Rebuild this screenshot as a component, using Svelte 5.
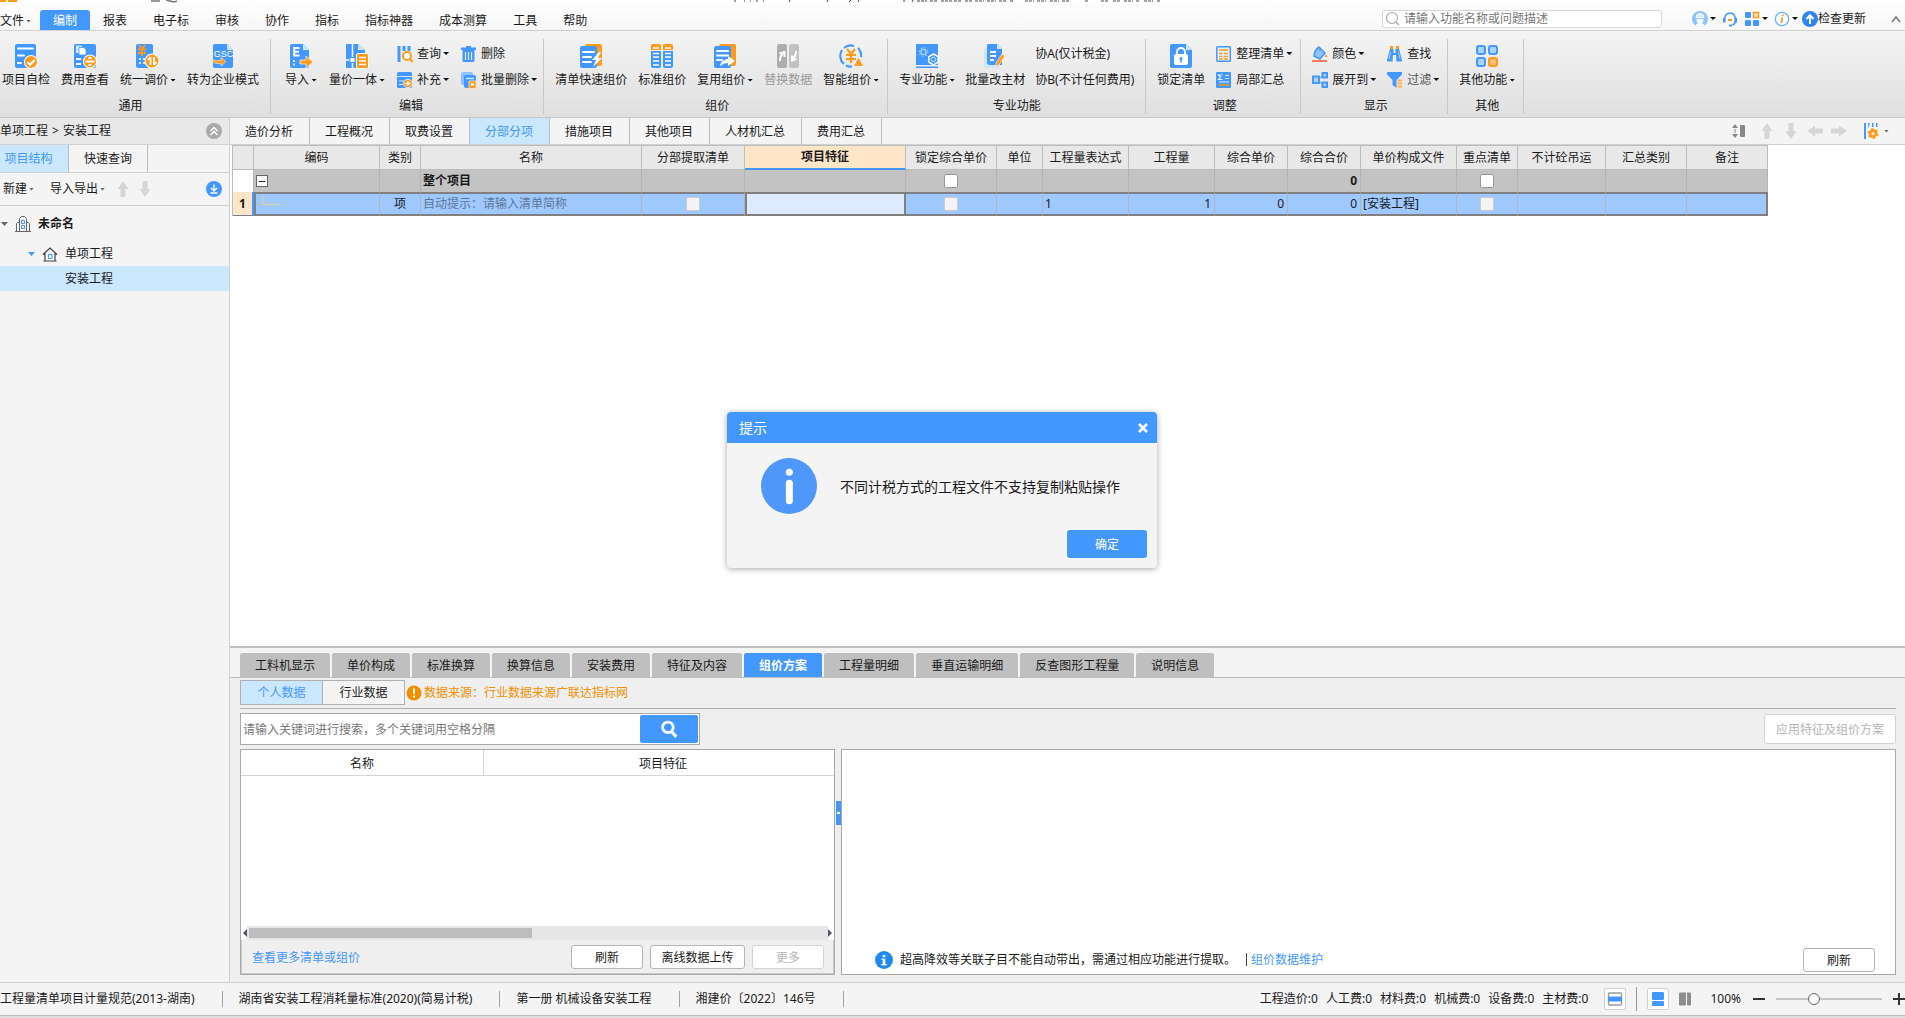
<script>
	const B = '#4398ff';
	const O = '#ff9a1a';

	let menu = $state('编制');
	let docTab = $state('分部分项');
	let sideTab = $state('项目结构');
	let detailTab = $state('组价方案');
	let source = $state('个人数据');
	let keyword = $state('');
	let helpQuery = $state('');
	let zoom = $state(34);
	let dialogOpen = $state(true);

	const menus = ['编制', '报表', '电子标', '审核', '协作', '指标', '指标神器', '成本测算', '工具', '帮助'];
	const docTabs = ['造价分析', '工程概况', '取费设置', '分部分项', '措施项目', '其他项目', '人材机汇总', '费用汇总'];
	const sideTabs = ['项目结构', '快速查询'];
	const detailTabs = ['工料机显示', '单价构成', '标准换算', '换算信息', '安装费用', '特征及内容', '组价方案', '工程量明细', '垂直运输明细', '反查图形工程量', '说明信息'];
	const costs = ['工程造价', '人工费', '材料费', '机械费', '设备费', '主材费'];
	const rules = ['工程量清单项目计量规范(2013-湖南)', '湖南省安装工程消耗量标准(2020)(简易计税)', '第一册 机械设备安装工程', '湘建价〔2022〕146号'];

	const groups = [
		{
			name: '通用',
			id: 'common',
			big: [
				{ t: '项目自检', i: 'check' },
				{ t: '费用查看', i: 'fee' },
				{ t: '统一调价', i: 'adjust', more: true },
				{ t: '转为企业模式', i: 'gsc' }
			]
		},
		{
			name: '编辑',
			id: 'edit',
			big: [
				{ t: '导入', i: 'import', more: true },
				{ t: '量价一体', i: 'merge', more: true }
			],
			cols: [
				[{ t: '查询', i: 'query', more: true }, { t: '补充', i: 'supply', more: true }],
				[{ t: '删除', i: 'trash' }, { t: '批量删除', i: 'batchDel', more: true }]
			]
		},
		{
			name: '组价',
			id: 'price',
			big: [
				{ t: '清单快速组价', i: 'quick' },
				{ t: '标准组价', i: 'standard' },
				{ t: '复用组价', i: 'reuse', more: true },
				{ t: '替换数据', i: 'swap', off: true },
				{ t: '智能组价', i: 'smart', more: true }
			]
		},
		{
			name: '专业功能',
			id: 'pro',
			big: [
				{ t: '专业功能', i: 'pro', more: true },
				{ t: '批量改主材', i: 'batchEdit' }
			],
			cols: [[{ t: '协A(仅计税金)' }, { t: '协B(不计任何费用)' }]]
		},
		{
			name: '调整',
			id: 'tune',
			big: [{ t: '锁定清单', i: 'lock' }],
			cols: [[{ t: '整理清单', i: 'sort', more: true }, { t: '局部汇总', i: 'sum' }]]
		},
		{
			name: '显示',
			id: 'view',
			big: [],
			cols: [
				[{ t: '颜色', i: 'color', more: true }, { t: '展开到', i: 'expand', more: true }],
				[{ t: '查找', i: 'find' }, { t: '过滤', i: 'filter', more: true, dim: true }]
			]
		},
		{ name: '其他', id: 'other', big: [{ t: '其他功能', i: 'other', more: true }] }
	];

	const columns = [
		{ t: '', w: 21 },
		{ t: '编码', w: 126 },
		{ t: '类别', w: 41 },
		{ t: '名称', w: 221 },
		{ t: '分部提取清单', w: 103 },
		{ t: '项目特征', w: 161 },
		{ t: '锁定综合单价', w: 91 },
		{ t: '单位', w: 46 },
		{ t: '工程量表达式', w: 86 },
		{ t: '工程量', w: 86 },
		{ t: '综合单价', w: 73 },
		{ t: '综合合价', w: 73 },
		{ t: '单价构成文件', w: 96 },
		{ t: '重点清单', w: 61 },
		{ t: '不计砼吊运', w: 88 },
		{ t: '汇总类别', w: 81 },
		{ t: '备注', w: 81 }
	];

	const icons = {
		check: `<rect x="1" width="21" height="24" rx="2" fill="${B}"/><path d="M4 4.500h15M4 11.500h6M4 19h3" stroke="#fff" stroke-width="2" stroke-linecap="round"/><circle cx="17" cy="18" r="7" fill="#fff"/><circle cx="17" cy="18" r="6" fill="${O}"/><path d="M13.500 18l2.500 3 4.500-5" fill="none" stroke="#fff" stroke-width="2"/>`,
		fee: `<rect x="1" width="22" height="24" rx="2" fill="${B}"/><path d="M3 1.500h5l2 2V9H3z" fill="#cbe7fe"/><path d="M6 3.500h5l2 2V11H6z" fill="#fff" stroke="${B}" stroke-width=".8"/><path d="M3 15h5M3 20h5" stroke="#fff" stroke-width="2"/><circle cx="17" cy="17.500" r="7" fill="#fff"/><circle cx="17" cy="17.500" r="6" fill="${O}"/><path d="M12.500 17.500h9M15.500 14h3M15.500 21h3" stroke="#fff" stroke-width="1.800"/>`,
		adjust: `<rect x="0" width="17" height="24" rx="2" fill="${B}"/><path d="M3 1l3 4 3-4M2 5.500h8M2 9h8M6 5v7" fill="none" stroke="${O}" stroke-width="2"/><path d="M3 15h2M3 19h2M7 15h2M7 19h2" stroke="#fff" stroke-width="1.500"/><circle cx="16" cy="17" r="7.500" fill="#fff"/><circle cx="16" cy="17" r="6.500" fill="${O}"/><path d="M14.500 13v8M12 16l2.500-3M18 13v8M20.500 18L18 21" fill="none" stroke="#fff" stroke-width="1.800"/>`,
		gsc: `<path d="M4 0h12l6 6v16a2 2 0 0 1-2 2H4a2 2 0 0 1-2-2V2a2 2 0 0 1 2-2z" fill="${B}"/><path d="M16 0v6h6z" fill="#cbe7fe"/><text x="12.500" y="13" text-anchor="middle" font-size="9" fill="#fff" font-family="Liberation Sans, sans-serif">GSC</text><path d="M1 15c1 5 5 5 9 4v3l5-4.500-5-4v2.500c-3 .8-6 1-9-1z" fill="${O}" stroke="#fff" stroke-width=".5"/>`,
		import: `<path d="M3 0h11l6 6v16a2 2 0 0 1-2 2H3a2 2 0 0 1-2-2V2a2 2 0 0 1 2-2z" fill="${B}"/><path d="M14 0v6h6z" fill="#cbe7fe"/><path d="M10.500 4H5.200v7.500h5.300M5 7.700h5" fill="none" stroke="#fff" stroke-width="2"/><path d="M4 16h2v2H4zM4 19.500h2v2H4z" fill="#cbe7fe"/><path d="M11 16h6v-4l7 6-7 6v-4h-6z" fill="${O}" stroke="#eee" stroke-width=".8"/>`,
		merge: `<path d="M2 0h11l7 6v18H2a1 1 0 0 1-1-1V1a1 1 0 0 1 1-1z" fill="${B}"/><path d="M13 0v6h7z" fill="#cbe7fe"/><path d="M7.500 0v24M1 16h19" stroke="#fff" stroke-width="1.500"/><rect x="5" y="13.500" width="5" height="5" fill="#fff" stroke="${B}"/><rect x="11.500" y="9.500" width="12" height="15" rx="1.500" fill="${O}" stroke="#fff"/><path d="M14 13.500h7M14 17h7M14 20.500h7" stroke="#fff" stroke-width="1.600"/>`,
		quick: `<rect x="6" width="17" height="22" rx="2" fill="${O}"/><rect x="1" y="2" width="17" height="22" rx="2" fill="${B}"/><path d="M4 8h11M4 13h8M4 18h8" stroke="#fff" stroke-width="2" stroke-linecap="round"/><path d="M20 8l-7 8h4l-3 7 9-9h-4l3-6z" fill="#fff"/>`,
		standard: `<path d="M1 2a2 2 0 0 1 2-2h6a2 2 0 0 1 2 2v4H1zM13 2a2 2 0 0 1 2-2h6a2 2 0 0 1 2 2v4H13z" fill="${O}"/><path d="M1 7h10v15a2 2 0 0 1-2 2H3a2 2 0 0 1-2-2zM13 7h10v15a2 2 0 0 1-2 2h-6a2 2 0 0 1-2-2z" fill="${B}"/><path d="M3 4h6M15 4h6M3 9.500h6M15 9.500h6M3 13h6M15 13h6M3 17h6M15 17h6M3 21h6M15 21h6" stroke="#fff" stroke-width="1.400"/>`,
		reuse: `<rect x="6" width="17" height="22" rx="2" fill="${O}"/><rect x="1" y="2" width="17" height="22" rx="2" fill="${B}"/><path d="M4 7h11M4 11.500h11M4 16h5" stroke="#fff" stroke-width="2" stroke-linecap="round"/><path d="M7 22c1-5 5-7 8-7v-3l7 5-7 5v-3c-3 0-5 1-8 3z" fill="#fff"/>`,
		swap: `<rect x="1" width="10" height="24" rx="2" fill="#adadad"/><rect x="13" width="10" height="24" rx="2" fill="#c2c2c2"/><path d="M4 17c0-4 1-6 3-7M3.500 9.500L8.500 8v5M20 7c0 4-1 6-3 7M20.500 15l-4.500 1.500v-5" fill="none" stroke="#fff" stroke-width="2"/>`,
		smart: `<path d="M5 20A10.500 10.500 0 0 1 3 6M5 4a10.500 10.500 0 0 1 10-2M19 4a10.500 10.500 0 0 1 3 9M7 21.500a10 10 0 0 0 6 1" fill="none" stroke="${B}" stroke-width="2.200"/><path d="M8 5l4 5 4-5M7 11h10M7 15h10M12 10v9" fill="none" stroke="${O}" stroke-width="2.200"/><path d="M15 22l4.500-8 4.500 8z" fill="${O}"/>`,
		pro: `<path d="M2 0h20a1 1 0 0 1 1 1v20H1V1a1 1 0 0 1 1-1zM1 22.500h22V24H1z" fill="${B}"/><circle cx="8.500" cy="8" r="2.600" fill="none" stroke="#a9d2ff" stroke-width="1.300"/><circle cx="8.500" cy="8" r="4.200" fill="none" stroke="#a9d2ff" stroke-width="1.200" stroke-dasharray="1.300 2"/><path d="M18.500 10l4.700 2.700v5.400l-4.700 2.700-4.700-2.700v-5.400z" fill="${B}" stroke="#fff" stroke-width="1.500"/><circle cx="18.500" cy="15.400" r="2.200" fill="${B}" stroke="#cbe7fe"/>`,
		batchEdit: `<path d="M3 4h14v18a2 2 0 0 1-2 2H3a2 2 0 0 1-2-2V6z" fill="#cbe7fe"/><path d="M5 0h9l5 5v16H7a3 3 0 0 1-3-3V1z" fill="${B}"/><path d="M14 0v5h5z" fill="#cbe7fe"/><path d="M7 8h6M7 12h6M7 16h4" stroke="#fff" stroke-width="1.800"/><path d="M19 10l3 2-6 9-3.500 1.500.5-3.500z" fill="${O}" stroke="#fff" stroke-width=".6"/>`,
		lock: `<path d="M3 0h14l6 6v16a2 2 0 0 1-2 2H3a2 2 0 0 1-2-2V2a2 2 0 0 1 2-2z" fill="${B}"/><path d="M17 0v6h6z" fill="#cbe7fe"/><path d="M8 11V8a4 4 0 0 1 8 0v3" fill="none" stroke="#fff" stroke-width="2"/><rect x="5" y="10" width="14" height="11" rx="2" fill="#fff"/><circle cx="12" cy="14.500" r="1.600" fill="${B}"/><path d="M12 15v3.500" stroke="${B}" stroke-width="1.600"/>`,
		other: `<rect x="2" y="2" width="8" height="8" rx="2" fill="#a9d2ff" stroke="${B}" stroke-width="2"/><rect x="14" y="2" width="8" height="8" rx="2" fill="#a9d2ff" stroke="${B}" stroke-width="2"/><rect x="2" y="14" width="8" height="8" rx="2" fill="#a9d2ff" stroke="${B}" stroke-width="2"/><rect x="14" y="14" width="8" height="8" rx="2" fill="#ffbf70" stroke="${O}" stroke-width="2"/>`,
		query: `<path d="M.5 0h3v16h-3zM5.500 0h3v5h-3zM10.500 0h3v5h-3z" fill="${B}"/><circle cx="10" cy="10" r="4" fill="#fff" stroke="${O}" stroke-width="2"/><path d="M12.500 12.500L15.500 16" stroke="${O}" stroke-width="2"/>`,
		supply: `<rect width="15" height="16" rx="1.500" fill="${B}"/><path d="M0 4.500h15M2 9h5M2 12.500h4" stroke="#cbe7fe" stroke-width="1.200"/><circle cx="11" cy="11.500" r="4.300" fill="${O}" stroke="#eee"/><path d="M8.500 11.500h5M11 9v5" stroke="#fff" stroke-width="1.400"/>`,
		trash: `<path d="M5 0h5v1.500h5V4H0V1.500h5zM1.500 4h12v10.500a1.500 1.500 0 0 1-1.500 1.500H3a1.500 1.500 0 0 1-1.500-1.500z" fill="${B}"/><path d="M4.500 6v8M7.500 6v8M10.500 6v8" stroke="#d8ebff" stroke-width="1.200"/>`,
		batchDel: `<rect width="12" height="13" rx="2" fill="#8cc2ff"/><rect x="3" y="3" width="12" height="13" rx="2" fill="${B}"/><path d="M5 6.500h8" stroke="#cbe7fe" stroke-width="1.500"/><path d="M8 9h7v6.500a1 1 0 0 1-1 1H9a1 1 0 0 1-1-1z" fill="${O}" stroke="#ffe5c8" stroke-width=".8"/><path d="M10 11h3v3h-3z" fill="#ffe5c8"/>`,
		sort: `<rect x=".8" y=".8" width="13.500" height="14.500" rx="1" fill="#e3f0ff" stroke="${B}" stroke-width="1.500"/><path d="M3 4h9M3 7.500h3.500M3 10.500h3.500M3 13h3.500M8 7.500h4M8 10.500h4M8 13h4" stroke="${O}" stroke-width="1.700"/>`,
		sum: `<rect width="15" height="16" rx="1" fill="${B}"/><path d="M6.500 3H2.500l2 2-2 2.500h4M9 3.500h4M9 6.500h4M3 10h10" fill="none" stroke="#e3f0ff" stroke-width="1.200"/><path d="M3 13h10" stroke="${O}" stroke-width="1.500"/>`,
		color: `<path d="M7 1l6 6-5 6-6-3 1-5z" fill="#8cc2ff" stroke="${B}" stroke-width="1.500"/><path d="M4 5C4 0 8 0 8 5" fill="none" stroke="${B}"/><path d="M14 8l1.500 3h-3z" fill="${O}"/><path d="M0 15h15" stroke="#f47a5a" stroke-width="2"/>`,
		expand: `<rect x="1" y="4.500" width="6" height="6.500" fill="#a9d2ff" stroke="${B}" stroke-width="2"/><rect x="10.500" y="1" width="4.500" height="4.500" fill="#a9d2ff" stroke="${B}" stroke-width="2"/><rect x="10.500" y="10.500" width="4.500" height="4.500" fill="#a9d2ff" stroke="${B}" stroke-width="2"/><path d="M7 7l3-3M7 9l3 3" stroke="${B}"/>`,
		find: `<path d="M3 3h3.500v4h2V3H12l3 11v1.500H9.500L9 9H6l-.5 6.500H0V14z" fill="${B}"/><path d="M3 0h3v3H3zM9 0h3v3H9z" fill="${O}"/><path d="M3.500 6L2 13M11.500 6l1.500 7" stroke="#a9d2ff"/>`,
		filter: `<path d="M0 0h15v2.500L9.500 8v8L5.500 13V8L0 2.500z" fill="${B}"/><path d="M10.500 8.500H15M10.500 11.500H15M10.500 14.500H15" stroke="#ffb24d" stroke-width="1.800"/>`,
		user: `<circle cx="8" cy="8" r="8" fill="#8cc2ff"/><path d="M4.500 8h7v1.500a3.500 3.500 0 0 1-1.500 2.700l3 2a8 8 0 0 1-10 0l3-2a3.500 3.500 0 0 1-1.500-2.700z" fill="#f4faff"/><path d="M4 6.500a4 4 0 0 1 8 0zM8 2v3" fill="#cbe7fe" stroke="#fff" stroke-width="1"/>`,
		headset: `<path d="M2.500 8a5.500 6 0 0 1 11 0v2a5.500 4.500 0 0 1-3 4" fill="none" stroke="${B}" stroke-width="1.600"/><path d="M1 7h2.500v4.500H1zM12.500 7H15v4.500h-2.500z" fill="${B}"/><path d="M6 9h4" stroke="${O}" stroke-width="2"/><path d="M7 14.500h3" stroke="${B}" stroke-width="2"/>`,
		apps: `<rect x="1" y="1" width="6" height="6" rx="1" fill="${B}"/><rect x="9.500" y="1.500" width="5" height="5" fill="#ffe5c8" stroke="${O}" stroke-width="1.500"/><rect x="1" y="9" width="6" height="6" rx="1" fill="${B}"/><rect x="9" y="9" width="6" height="6" rx="1" fill="${B}"/>`,
		about: `<circle cx="8" cy="8" r="6.700" fill="#f4faff" stroke="#74b4ff" stroke-width="1.300"/><path d="M8.300 6.500L7.500 12" stroke="${O}" stroke-width="1.700"/><circle cx="8.800" cy="4.200" r="1" fill="${O}"/>`,
		update: `<circle cx="8" cy="8" r="8" fill="#2d86f7"/><path d="M8 13V5M4.500 8L8 4.300 11.500 8" fill="none" stroke="#fff" stroke-width="2"/>`,
		rowHeight: `<path d="M3 1l3 4H0zM3 15l3-4H0zM2.500 6h1v4h-1z" fill="#888"/><rect x="8" y="2" width="5" height="12" rx="1" fill="#888"/>`,
		up: `<path d="M8 0l5.500 8h-3v8h-5V8h-3z" fill="#d6d6d6"/>`,
		down: `<path d="M8 16l5.500-8h-3V0h-5v8h-3z" fill="#d6d6d6"/>`,
		left: `<path d="M0 8l8-5.500v3h8v5H8v3z" fill="#d6d6d6"/>`,
		right: `<path d="M16 8L8 2.500v3H0v5h8v3z" fill="#d6d6d6"/>`,
		columns: `<path d="M1 0h2v16H1zM5 0h1.500v3l-1 2zM9 0h1.500v4H9zM13 0h1.500v4H13z" fill="${B}"/><circle cx="10" cy="10.500" r="3" fill="none" stroke="${O}" stroke-width="2.800"/><circle cx="10" cy="10.500" r="4.600" fill="none" stroke="${O}" stroke-width="1.600" stroke-dasharray="2.400 2.400"/>`,
		collapse: `<circle cx="8" cy="8" r="8" fill="#aaa"/><path d="M4.500 8L8 4.500 11.500 8M4.500 12L8 8.500l3.500 3.500" fill="none" stroke="#fff" stroke-width="1.500"/>`,
		download: `<circle cx="8" cy="8" r="8" fill="${B}"/><path d="M8 3.500v6M5 7l3 3 3-3M4.500 12h7" fill="none" stroke="#fff" stroke-width="1.400"/>`,
		building: `<path d="M4.500 15V2.500l2-2h3l2 2V15M4.500 6.500h-2l-1 1V15M11.500 6.500h2l1 1V15M0 15.500h16" fill="none" stroke="#666"/><path d="M6.500 4.500h3v3h-3zM6.500 9.500h3v3h-3z" fill="none" stroke="${B}"/>`,
		house: `<path d="M1 8.500L8 2l7 6.500M3 7.500V15h10V7.500M1.500 15h13" fill="none" stroke="#444" stroke-width="1.200"/><path d="M6.500 8.500h3.500v4H6.500z" fill="none" stroke="${B}"/>`,
		warn: `<circle cx="8" cy="8" r="7.500" fill="#f28f00"/><path d="M7 3.500h2V9H7zM7 10.500h2v2H7z" fill="#fff"/>`,
		info: `<circle cx="8" cy="8" r="8" fill="#1f8bf0"/><path d="M6.800 3.500h2.400v2H6.800zM5.800 6.800h3.400v4.700h1.300v1.200H5.500v-1.200h1.300V8h-1z" fill="#fff"/>`,
		bigInfo: `<circle cx="8" cy="8" r="8" fill="#4f97fb"/><circle cx="8.100" cy="4.100" r="1" fill="#fff"/><path d="M8.100 7.200v5" stroke="#fff" stroke-width="2" stroke-linecap="round"/>`,
		search: `<circle cx="7" cy="6.500" r="4.700" fill="none" stroke="#fff" stroke-width="2.400"/><path d="M10.500 10.500L14.500 15" stroke="#fff" stroke-width="2.800"/>`,
		lens: `<circle cx="7" cy="7" r="5.500" fill="none" stroke="#aaa" stroke-width="1.200"/><path d="M11 11l3 3" stroke="#aaa" stroke-width="1.500"/>`,
		paneMid: `<rect x="1.500" y="2" width="13" height="12" rx="1" fill="#fff" stroke="#999" stroke-width="1.300"/><path d="M1 5.500h14v5H1z" fill="${B}"/>`,
		paneRow: `<rect x="2" y="1" width="12" height="8" rx="1.200" fill="${B}"/><rect x="2" y="10" width="12" height="5" rx="1.200" fill="${B}"/>`,
		paneCol: `<rect x="2" y="1.500" width="7" height="13" rx="1" fill="#8d8d8d"/><rect x="10" y="1.500" width="4" height="13" rx="1" fill="#8d8d8d"/>`
	};
</script>

{#snippet icon(name, box = 16, size = '')}
	<svg class="icon {size}" viewBox="0 0 {box} {box}" aria-hidden="true">{@html icons[name]}</svg>
{/snippet}

{#snippet caret()}<span class="caret"></span>{/snippet}

{#snippet tool(b)}
	<button class="small" class:dim={b.dim}>
		{#if b.i}{@render icon(b.i)}{/if}<span>{b.t}</span>{#if b.more}{@render caret()}{/if}
	</button>
{/snippet}

<div class="app">
	<header class="menubar">
		<svg class="titlebar" viewBox="0 0 1905 3" aria-hidden="true">
			<path d="M0 1h6M8 1h9" stroke={O} stroke-width="2" />
			<path d="M151 1h9M166 0l8 2 3-1" stroke="#777" stroke-width="1.500" fill="none" />
			<path d="M734 1h2M744 1h1M750 1h1M756 1h2M763 1h1M789 2l1-2M827 2l1-2M849 2l2-2M858 2l1-2M904 0v2M912 2l1-2M917 1h10M930 1h8M941 1h11M954 1h8M965 1h7M975 1h9M987 1h9M999 1h8M1010 1h3M1025 1h9M1037 1h9M1050 1h9M1062 1h8M1085 1h3M1101 1h8M1113 1h8M1124 1h9M1136 1h4M1144 1h9M1157 1h3" stroke="#444" stroke-width="1" stroke-dasharray="3 1" />
		</svg>
		<nav class="menus">
			<button class="file">文件<span class="caret grey"></span></button>
			{#each menus as m}
				<button class:active={menu === m} onclick={() => (menu = m)}>{m}</button>
			{/each}
		</nav>
		<label class="help-search">
			{@render icon('lens')}
			<input bind:value={helpQuery} placeholder="请输入功能名称或问题描述" aria-label="搜索功能" />
		</label>
		<div class="account">
			<button aria-label="用户">{@render icon('user')}{@render caret()}</button>
			<button aria-label="客服">{@render icon('headset')}</button>
			<button aria-label="应用">{@render icon('apps')}{@render caret()}</button>
			<button aria-label="关于">{@render icon('about')}{@render caret()}</button>
			<button class="update">{@render icon('update')}检查更新</button>
			<button class="fold" aria-label="收起">
				<svg viewBox="0 0 10 8" aria-hidden="true"><path d="M1 7l4-5 4 5" fill="none" stroke="#888" stroke-width="2" /></svg>
			</button>
		</div>
	</header>

	<div class="ribbon">
		{#each groups as g}
			<section class="group {g.id}">
				<div class="tools">
					{#each g.big as b}
						<button class="big" disabled={b.off}>
							{@render icon(b.i, 24, 'lg')}
							<span class="label">{b.t}{#if b.more}{@render caret()}{/if}</span>
						</button>
					{/each}
					{#each g.cols ?? [] as col}
						<div class="col">
							{#each col as b}{@render tool(b)}{/each}
						</div>
					{/each}
				</div>
				<div class="group-name">{g.name}</div>
			</section>
		{/each}
	</div>

	<div class="body">
		<aside class="side">
			<div class="crumb">
				<span>单项工程</span>
				<span>&gt;</span>
				<span>安装工程</span>
				<button aria-label="折叠">{@render icon('collapse')}</button>
			</div>
			<div class="side-tabs">
				{#each sideTabs as t}
					<button class:active={sideTab === t} onclick={() => (sideTab = t)}>{t}</button>
				{/each}
			</div>
			<div class="side-tools">
				<button>新建<span class="caret grey"></span></button>
				<button>导入导出<span class="caret grey"></span></button>
				<button aria-label="上移">{@render icon('up')}</button>
				<button aria-label="下移">{@render icon('down')}</button>
				<button class="end" aria-label="下载">{@render icon('download')}</button>
			</div>
			<ul class="tree">
				<li class="root"><span class="caret grey"></span>{@render icon('building')}<b>未命名</b></li>
				<li class="unit"><span class="caret blue"></span>{@render icon('house')}<span>单项工程</span></li>
				<li class="leaf selected">安装工程</li>
			</ul>
		</aside>

		<main>
			<div class="doc-tabs">
				{#each docTabs as t}
					<button class:active={docTab === t} onclick={() => (docTab = t)}>{t}</button>
				{/each}
				<div class="doc-tools">
					<button aria-label="行高">{@render icon('rowHeight')}</button>
					<button aria-label="上移">{@render icon('up')}</button>
					<button aria-label="下移">{@render icon('down')}</button>
					<button aria-label="左移">{@render icon('left')}</button>
					<button aria-label="右移">{@render icon('right')}</button>
					<button class="setup" aria-label="列设置">{@render icon('columns')}<span class="caret grey"></span></button>
				</div>
			</div>

			<div class="grid">
				<table>
					<colgroup>
						{#each columns as c}<col style="width: {c.w}px" />{/each}
					</colgroup>
					<thead>
						<tr>
							{#each columns as c}<th class:current={c.t === '项目特征'}>{c.t}</th>{/each}
						</tr>
					</thead>
					<tbody>
						<tr class="total">
							<td class="num"></td>
							<td class="code"><button class="minus" aria-label="收起"></button></td>
							<td></td>
							<td>整个项目</td>
							<td></td>
							<td></td>
							<td class="mid"><input type="checkbox" aria-label="锁定综合单价" /></td>
							<td></td>
							<td></td>
							<td></td>
							<td></td>
							<td class="right">0</td>
							<td></td>
							<td class="mid"><input type="checkbox" aria-label="重点清单" /></td>
							<td></td>
							<td></td>
							<td></td>
						</tr>
						<tr class="picked">
							<td class="num">1</td>
							<td class="code">
								<svg class="branch" viewBox="0 0 18 18" aria-hidden="true"><path d="M.5 0v9.500h17" fill="none" stroke="#eccb9c" /></svg>
							</td>
							<td class="mid">项</td>
							<td class="hint">自动提示：请输入清单简称</td>
							<td class="mid"><input type="checkbox" disabled aria-label="分部提取清单" /></td>
							<td class="cursor"></td>
							<td class="mid"><input type="checkbox" disabled aria-label="锁定综合单价" /></td>
							<td></td>
							<td>1</td>
							<td class="right">1</td>
							<td class="right">0</td>
							<td class="right">0</td>
							<td>[安装工程]</td>
							<td class="mid"><input type="checkbox" disabled aria-label="重点清单" /></td>
							<td></td>
							<td></td>
							<td></td>
						</tr>
					</tbody>
				</table>
			</div>

			<section class="detail">
				<div class="detail-tabs">
					{#each detailTabs as t}
						<button class:active={detailTab === t} onclick={() => (detailTab = t)}>{t}</button>
					{/each}
				</div>
				<div class="source">
					{#each ['个人数据', '行业数据'] as s}
						<button class:active={source === s} onclick={() => (source = s)}>{s}</button>
					{/each}
					{@render icon('warn')}
					<span>数据来源：行业数据来源广联达指标网</span>
				</div>
				<div class="search-row">
					<div class="search">
						<input bind:value={keyword} placeholder="请输入关键词进行搜索，多个关键词用空格分隔" aria-label="关键词" />
						<button aria-label="搜索">{@render icon('search', 16, 'md')}</button>
					</div>
					<button class="btn apply" disabled>应用特征及组价方案</button>
				</div>
				<div class="panes">
					<div class="pane schemes">
						<table>
							<thead><tr><th class="name">名称</th><th class="feature">项目特征</th></tr></thead>
						</table>
						<div class="hscroll">
							<span class="arrow prev"></span>
							<div class="track"><div class="thumb"></div></div>
							<span class="arrow next"></span>
						</div>
						<footer>
							<a href="#more">查看更多清单或组价</a>
							<button class="btn">刷新</button>
							<button class="btn wide">离线数据上传</button>
							<button class="btn" disabled>更多</button>
						</footer>
					</div>
					<button class="splitter" aria-label="收起面板"></button>
					<div class="pane result">
						<footer>
							{@render icon('info', 16, 'md')}
							<span class="note">超高降效等关联子目不能自动带出，需通过相应功能进行提取。</span>
							<a href="#maintain">组价数据维护</a>
							<button class="btn">刷新</button>
						</footer>
					</div>
				</div>
			</section>
		</main>
	</div>

	<footer class="status">
		{#each rules as r}<span class="rule">{r}</span>{/each}
		<div class="costs">
			{#each costs as c}<span>{c}:0</span>{/each}
		</div>
		<button class="pane-btn boxed" aria-label="显示中部">{@render icon('paneMid')}</button>
		<span class="bar"></span>
		<button class="pane-btn boxed" aria-label="上下布局">{@render icon('paneRow')}</button>
		<button class="pane-btn" aria-label="左右布局">{@render icon('paneCol')}</button>
		<span class="percent">100%</span>
		<button class="step" aria-label="缩小" onclick={() => (zoom -= 5)}></button>
		<input type="range" min="0" max="100" bind:value={zoom} aria-label="缩放" />
		<button class="step plus" aria-label="放大" onclick={() => (zoom += 5)}></button>
	</footer>

	{#if dialogOpen}
		<div class="dialog" role="alertdialog" aria-labelledby="dlg-title">
			<header>
				<h2 id="dlg-title">提示</h2>
				<button aria-label="关闭" onclick={() => (dialogOpen = false)}>
					<svg viewBox="0 0 10 10" aria-hidden="true"><path d="M1 1l8 8M9 1l-8 8" stroke="#fff" stroke-width="2.500" /></svg>
				</button>
			</header>
			<div class="message">
				{@render icon('bigInfo', 16, 'xl')}
				<p>不同计税方式的工程文件不支持复制粘贴操作</p>
			</div>
			<button class="ok" onclick={() => (dialogOpen = false)}>确定</button>
		</div>
	{/if}
</div>

<style>
	:global(body) {
		overflow: hidden;
	}

	.app {
		--blue: #4398ff;
		--sky: #cbe7fe;
		--line: #bdbdbd;
		display: flex;
		flex-direction: column;
		min-height: 100vh;
		box-sizing: border-box;
		border-bottom: 2px solid #dedede;
		background: #f4f4f4;
		color: #1a1a1a;
		font: 12px/16px 'Noto Sans', 'Noto Sans CJK SC', sans-serif;
		white-space: nowrap;
	}

	.app :global(*) {
		box-sizing: border-box;
	}

	button,
	input {
		margin: 0;
		padding: 0;
		border: 0;
		background: none;
		color: inherit;
		font: inherit;
	}

	button {
		display: flex;
		align-items: center;
		justify-content: center;
	}

	input::placeholder {
		color: #777;
		opacity: 1;
	}

	a {
		color: var(--blue);
		text-decoration: none;
	}

	.icon {
		width: 16px;
		height: 16px;
		flex: none;
		overflow: visible;
	}

	.icon.md {
		width: 18px;
		height: 18px;
	}

	.icon.lg {
		width: 24px;
		height: 24px;
	}

	.icon.xl {
		width: 56px;
		height: 56px;
	}

	.caret {
		width: 6px;
		height: 3px;
		margin-left: 2px;
		flex: none;
		background: #111;
		clip-path: polygon(0 0, 100% 0, 50% 100%);
	}

	.caret.grey {
		width: 5px;
		background: #666;
	}

	.caret.blue {
		background: var(--blue);
	}

	/* menu bar */
	.menubar {
		position: relative;
		display: flex;
		align-items: flex-end;
		height: 31px;
		border-bottom: 1px solid #d2d2d2;
		background: linear-gradient(#fff, #f6f6f6);
	}

	.titlebar {
		position: absolute;
		top: 0;
		left: 0;
		width: 100%;
		height: 3px;
	}

	.menus {
		display: flex;
		flex: 1;
	}

	.menus button {
		height: 20px;
		padding: 2px 13px 0;
		border-radius: 3px 3px 0 0;
	}

	.menus .file {
		width: 40px;
		padding-left: 0;
		justify-content: flex-start;
	}

	.menus .active {
		background: var(--blue);
		color: #fff;
	}

	.help-search {
		display: flex;
		align-items: center;
		gap: 3px;
		width: 280px;
		height: 18px;
		margin-bottom: 2px;
		padding: 0 2px;
		border: 1px solid #d9d9d9;
		border-radius: 3px;
		background: #fff;
	}

	.help-search input {
		flex: 1;
		outline: none;
	}

	.account {
		display: flex;
		align-items: center;
		gap: 6px;
		height: 24px;
		padding: 1px 4px 0 30px;
	}

	.account .update {
		margin-left: -2px;
	}

	.account .fold {
		margin-left: 19px;
	}

	.fold svg {
		width: 10px;
		height: 8px;
	}

	/* ribbon */
	.ribbon {
		display: flex;
		height: 87px;
		padding-top: 8px;
		border-bottom: 1px solid #c9c9c9;
		background: linear-gradient(#f4f4f4, #dfdfdf);
	}

	.group {
		display: flex;
		flex-direction: column;
		height: 75px;
		padding: 5px 8px 0 11px;
		border-right: 1px solid #c8c8c8;
	}

	.group.common {
		padding: 5px 11px 0 2px;
	}

	.group.edit {
		padding: 5px 6px 0 14px;
	}

	.group.pro {
		padding-right: 11px;
	}

	.tools {
		display: flex;
		flex: 1;
		gap: 11px;
	}

	.edit .tools {
		gap: 12px;
	}

	.pro .tools {
		gap: 10px;
	}

	.big {
		flex-direction: column;
		justify-content: flex-start;
		gap: 4px;
	}

	.big:disabled {
		color: #999;
	}

	.label {
		display: flex;
		align-items: center;
	}

	.col {
		display: flex;
		flex-direction: column;
		gap: 9px;
		padding-top: 1px;
	}

	.small {
		justify-content: flex-start;
		gap: 4px;
		height: 17px;
	}

	.small .caret {
		margin-left: -2px;
	}

	.small.dim {
		color: #555;
	}

	.group-name {
		height: 16px;
		text-align: center;
	}

	/* side panel */
	.body {
		display: flex;
		flex: 1;
	}

	.side {
		display: flex;
		flex-direction: column;
		width: 230px;
		border-right: 1px solid #d0d0d0;
	}

	.crumb {
		display: flex;
		align-items: center;
		gap: 4px;
		height: 27px;
		padding-right: 7px;
		background: #e8e8e8;
		border-bottom: 1px solid #d0d0d0;
	}

	.crumb button {
		margin-left: auto;
	}

	.side-tabs {
		display: flex;
		height: 28px;
		border-bottom: 1px solid #d0d0d0;
	}

	.side-tabs button {
		width: 79px;
		border-right: 1px solid var(--line);
	}

	.side-tabs button:first-child {
		width: 69px;
		padding-right: 11px;
	}

	.side-tabs .active,
	.doc-tabs .active,
	.source .active {
		background: var(--sky);
		color: var(--blue);
	}

	.side-tools {
		display: flex;
		align-items: center;
		gap: 6px;
		height: 33px;
		padding: 0 7px 0 3px;
		border-bottom: 1px solid #d0d0d0;
	}

	.side-tools button:nth-child(2) {
		margin: 0 4px 0 10px;
	}

	.side-tools .end {
		margin-left: auto;
	}

	.tree {
		margin: 0;
		padding: 4px 0 0;
		list-style: none;
	}

	.tree li {
		display: flex;
		align-items: center;
		height: 25px;
	}

	.tree .caret {
		width: 7px;
		height: 4px;
		margin-left: 1px;
	}

	.tree .root {
		gap: 7px;
		height: 28px;
	}

	.tree .unit {
		gap: 7px;
		height: 28px;
		padding: 4px 0 0 27px;
	}

	.tree .leaf {
		padding-left: 65px;
	}

	.tree .selected {
		background: var(--sky);
	}

	/* document tabs */
	main {
		display: flex;
		flex: 1;
		flex-direction: column;
		min-width: 0;
	}

	.doc-tabs {
		display: flex;
		height: 27px;
		border-bottom: 1px solid #d0d0d0;
	}

	.doc-tabs > button {
		padding: 2px 16px 0 15px;
		border-right: 1px solid var(--line);
	}

	.doc-tools {
		display: flex;
		align-items: center;
		gap: 8px;
		margin-left: auto;
		padding-right: 16px;
	}

	.setup {
		gap: 3px;
		margin-left: 8px;
	}

	.doc-tools button:first-child {
		margin-right: 3px;
	}

	/* quantity grid */
	.grid {
		flex: 1;
		padding-left: 2px;
		background: #fff;
	}

	.grid table {
		width: 1535px;
		table-layout: fixed;
		border-spacing: 0;
		border-top: 1px solid var(--line);
		border-left: 1px solid var(--line);
	}

	.grid th {
		height: 24px;
		padding: 0;
		border-right: 1px solid var(--line);
		border-bottom: 1px solid var(--line);
		background: #e8e8e8;
		font-weight: 400;
	}

	.grid th.current {
		border-bottom: 2px solid var(--blue);
		background: #ffe5c8;
		font-weight: 700;
	}

	.grid td {
		padding: 0 3px 0 2px;
		border-right: 1px solid #b4b4b4;
	}

	.total td {
		height: 22px;
		background: #c3c3c3;
		font-weight: 700;
	}

	.picked td {
		height: 24px;
		border-top: 2px solid #808080;
		border-bottom: 2px solid #808080;
		background: #9fc8ff;
	}

	.grid .num {
		padding: 0;
		background: #fff;
		text-align: center;
	}

	.picked .num {
		border-top: 0;
		border-right: 2px solid var(--blue);
		border-bottom-width: 1px;
		background: #ffe5c8;
		font-weight: 700;
	}

	.picked .code {
		border-left: 2px solid #808080;
		padding-left: 6px;
	}

	.picked td:last-child {
		border-right: 2px solid #808080;
	}

	.grid .mid {
		padding: 0;
		text-align: center;
	}

	.grid .right {
		text-align: right;
	}

	.grid .hint {
		color: #5f7795;
	}

	.picked .cursor {
		border: 2px solid #808080;
		background: #deebff;
	}

	.minus {
		width: 12px;
		height: 12px;
		border: 1px solid #666;
		background: linear-gradient(#222, #222) center / 6px 1px no-repeat #fff;
	}

	.branch {
		display: block;
		width: 18px;
		height: 18px;
	}

	input[type='checkbox'] {
		display: block;
		width: 14px;
		height: 14px;
		margin: 0 auto;
		border: 1px solid #999;
		border-radius: 2px;
		background: #fff;
		appearance: none;
	}

	input[type='checkbox']:disabled {
		border-color: #ccc;
		background: #f3f3f3;
	}

	/* detail panel */
	.detail {
		border-top: 2px solid var(--line);
		background: #efefef;
	}

	.detail-tabs {
		display: flex;
		gap: 2px;
		height: 30px;
		padding: 5px 0 0 10px;
		border-bottom: 1px solid var(--line);
		background: #f4f4f4;
	}

	.detail-tabs button {
		padding: 2px 15px 0;
		border-radius: 2px 2px 0 0;
		background: #bfbfbf;
	}

	.detail-tabs .active {
		background: var(--blue);
		color: #fff;
		font-weight: 700;
	}

	.source {
		display: flex;
		align-items: center;
		height: 31px;
		margin: 0 9px 0 10px;
		padding-bottom: 1px;
		border-bottom: 1px solid #b0b0b0;
		color: #f28f00;
	}

	.source button {
		width: 83px;
		height: 25px;
		border: 1px solid #b0b0b0;
		background: #f4f4f4;
		color: #1a1a1a;
	}

	.source button + button {
		margin-left: -1px;
	}

	.source .icon {
		margin: 0 2px 0 1px;
	}

	.search-row {
		display: flex;
		align-items: center;
		justify-content: space-between;
		height: 40px;
		margin: 0 9px 0 10px;
	}

	.search {
		display: flex;
		width: 460px;
		height: 32px;
		border: 1px solid #a9a9a9;
		background: #fff;
	}

	.search input {
		flex: 1;
		padding: 2px 2px 0;
		outline: none;
	}

	.search button {
		width: 58px;
		margin: 1px;
		border-radius: 2px;
		background: var(--blue);
	}

	.btn {
		width: 72px;
		height: 24px;
		padding-top: 2px;
		border: 1px solid #b5b5b5;
		border-radius: 3px;
		background: #fff;
	}

	.btn.wide {
		width: 95px;
	}

	.btn.apply {
		width: 132px;
		height: 30px;
	}

	.btn:disabled {
		border-color: #d4d4d4;
		color: #b5b5b5;
	}

	.panes {
		display: flex;
		height: 233px;
		padding: 0 9px 7px 10px;
	}

	.pane {
		display: flex;
		flex-direction: column;
		border: 1px solid #a9a9a9;
		background: #fff;
	}

	.pane footer {
		display: flex;
		align-items: center;
	}

	.schemes {
		width: 595px;
	}

	.schemes table {
		width: 100%;
		border-spacing: 0;
	}

	.schemes th {
		height: 26px;
		padding: 2px 0 0;
		border-bottom: 1px solid #d5d5d5;
		font-weight: 400;
	}

	.schemes .name {
		width: 243px;
		border-right: 1px solid #d5d5d5;
	}

	.schemes .feature {
		padding-left: 8px;
	}

	.hscroll {
		display: flex;
		align-items: center;
		height: 14px;
		margin-top: auto;
		padding: 0 2px;
	}

	.arrow {
		width: 4px;
		height: 8px;
		background: #556;
	}

	.prev {
		clip-path: polygon(100% 0, 100% 100%, 0 50%);
	}

	.next {
		clip-path: polygon(0 0, 100% 50%, 0 100%);
	}

	.track {
		flex: 1;
		padding: 2px;
		background: #e6e6e6;
	}

	.thumb {
		width: 49%;
		height: 10px;
		background: #bdbdbd;
	}

	.schemes footer {
		gap: 7px;
		height: 34px;
		padding: 0 9px 0 10px;
		border: 1px solid #c9c9c9;
		border-top: 0;
		background: #efefef;
	}

	.schemes footer a {
		margin-right: auto;
		padding-top: 2px;
	}

	.splitter {
		align-self: flex-start;
		width: 5px;
		height: 24px;
		margin: 52px 0 0 1px;
		background: linear-gradient(#fff, #fff) center / 3px 2px no-repeat var(--blue);
	}

	.result {
		flex: 1;
	}

	.result footer {
		height: 27px;
		margin-top: auto;
		padding: 0 20px 2px 33px;
	}

	.note {
		margin: 0 10px 0 7px;
	}

	.result footer a {
		padding-left: 5px;
		background: linear-gradient(#444, #444) left center / 1px 13px no-repeat;
	}

	.result .btn {
		margin-left: auto;
	}

	/* status bar */
	.status {
		display: flex;
		align-items: center;
		height: 34px;
		border-top: 1px solid #d0d0d0;
		border-bottom: 1px solid var(--line);
	}

	.rule {
		padding: 0 27px 0 16px;
		border-right: 1px solid #9aa3b2;
	}

	.rule:first-child {
		padding-left: 0;
	}

	.costs {
		display: flex;
		gap: 8px;
		margin: 0 16px 0 auto;
	}

	.pane-btn {
		width: 22px;
		height: 22px;
	}

	.boxed {
		border: 1px solid #d0d0d0;
		border-radius: 2px;
		background: #fff;
	}

	.bar {
		width: 1px;
		height: 24px;
		margin: 0 10px;
		background: #999;
	}

	.boxed + .pane-btn {
		margin-left: 5px;
	}

	.percent {
		margin: 0 12px 0 14px;
	}

	.step {
		width: 12px;
		height: 12px;
		background: linear-gradient(#333, #333) center / 12px 2px no-repeat;
	}

	.plus {
		background: linear-gradient(#333, #333) center / 12px 2px no-repeat, linear-gradient(#333, #333) center / 2px 12px no-repeat;
	}

	input[type='range'] {
		width: 106px;
		height: 14px;
		margin: 0 11px;
		background: linear-gradient(#c6c6c6, #c6c6c6) center / 100% 2px no-repeat;
		appearance: none;
	}

	input[type='range']::-webkit-slider-thumb {
		width: 12px;
		height: 12px;
		border: 1px solid #666;
		border-radius: 50%;
		background: #fff;
		appearance: none;
	}

	/* message box */
	.dialog {
		position: absolute;
		top: 412px;
		left: 727px;
		width: 430px;
		border-radius: 4px;
		background: #f4f4f4;
		box-shadow: 0 1px 6px rgba(0, 0, 0, 0.35);
	}

	.dialog header {
		display: flex;
		align-items: center;
		justify-content: space-between;
		height: 31px;
		padding: 0 9px 0 12px;
		border-radius: 4px 4px 0 0;
		background: var(--blue);
		color: #fff;
	}

	.dialog h2 {
		margin: 0;
		font-size: 14px;
		font-weight: 400;
	}

	.dialog header svg {
		width: 10px;
		height: 10px;
	}

	.message {
		display: flex;
		align-items: center;
		gap: 23px;
		padding: 15px 34px 16px;
	}

	.message p {
		margin: 0;
		padding-top: 2px;
		font-size: 14px;
	}

	.ok {
		width: 80px;
		height: 28px;
		margin: 0 10px 10px auto;
		padding-top: 2px;
		border-radius: 3px;
		background: var(--blue);
		color: #fff;
	}
</style>
